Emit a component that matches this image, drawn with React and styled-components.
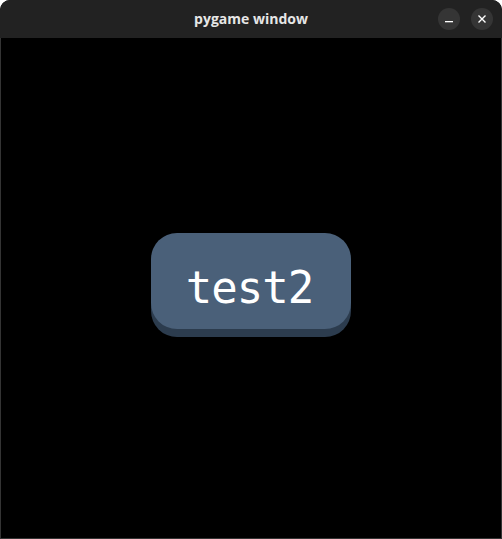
import React from 'react'
import styled, { createGlobalStyle } from 'styled-components'

const GlobalStyle = createGlobalStyle`
  html, body {
    margin: 0;
    padding: 0;
    background: #ffffff;
  }
`

const Window = styled.div`
  width: 502px;
  height: 539px;
  display: flex;
  flex-direction: column;
  border-radius: 10px 10px 0 0;
  overflow: hidden;
  background: #000000;
`

const TitleBar = styled.div`
  height: 38px;
  flex-shrink: 0;
  display: flex;
  align-items: center;
  justify-content: center;
  position: relative;
  background: #222222;

  .title {
    font-family: 'Open Sans', 'DejaVu Sans', sans-serif;
    font-weight: 700;
    font-size: 14px;
    color: #e6e6e6;
    margin-top: -1px;
  }
`

const Controls = styled.div`
  position: absolute;
  right: 9px;
  top: 8px;
  display: flex;
  gap: 11px;
`

const RoundButton = styled.div`
  width: 22px;
  height: 22px;
  border-radius: 50%;
  background: #353535;
  display: flex;
  align-items: center;
  justify-content: center;
`

const Body = styled.div`
  flex: 1;
  display: flex;
  align-items: center;
  justify-content: center;
  padding-bottom: 15px;
  border: 1px solid #343434;
  border-top: none;
`

const GameButton = styled.div`
  width: 200px;
  height: 96px;
  box-sizing: border-box;
  padding-top: 14px;
  padding-right: 3px;
  border-radius: 26px;
  background: #4a6079;
  box-shadow: 0 8px 0 #2c3c4e;
  display: flex;
  align-items: center;
  justify-content: center;

  font-family: 'DejaVu Sans Mono', 'Liberation Mono', monospace;
  font-weight: 400;
  font-size: 44px;
  color: #ffffff;
  letter-spacing: -1px;
`

const App = () => {
  return (
    <>
      <GlobalStyle />
      <Window>
        <TitleBar>
          <span className="title">pygame window</span>
          <Controls>
            <RoundButton>
              <svg width="10" height="10" viewBox="0 0 10 10">
                <rect x="1" y="7" width="8" height="1.3" fill="#ffffff" />
              </svg>
            </RoundButton>
            <RoundButton>
              <svg width="10" height="10" viewBox="0 0 10 10">
                <path d="M1.5 1.5 L8.5 8.5 M8.5 1.5 L1.5 8.5" stroke="#ffffff" strokeWidth="1.4" />
              </svg>
            </RoundButton>
          </Controls>
        </TitleBar>
        <Body>
          <GameButton>test2</GameButton>
        </Body>
      </Window>
    </>
  )
}

export default App
